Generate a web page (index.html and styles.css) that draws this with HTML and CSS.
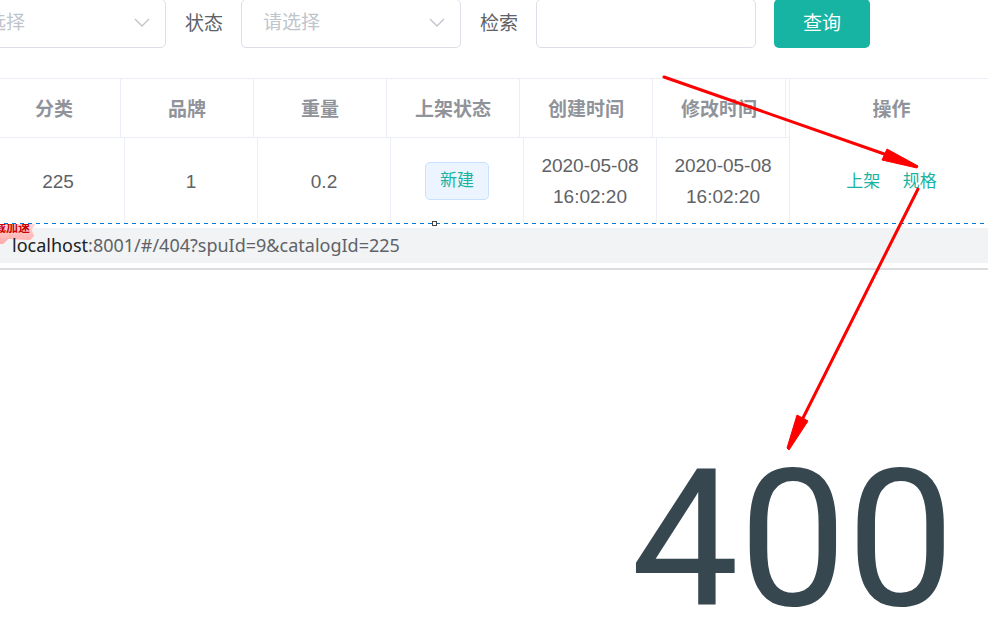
FILE: index.html
```html
<!DOCTYPE html>
<html lang="zh-CN">
<head>
  <meta charset="utf-8">
  <title>商品管理</title>
  <link rel="stylesheet" href="styles.css">
</head>
<body>
  <main class="page">
    <form class="filter">
      <div class="select-box">
        <select class="field" aria-label="品牌">
          <option>请选择</option>
        </select>
        <svg class="chevron" viewBox="0 0 16 9" aria-hidden="true"><path d="M1 1l7 7 7-7"/></svg>
      </div>
      <label for="status">状态</label>
      <div class="select-box">
        <select class="field" id="status">
          <option>请选择</option>
        </select>
        <svg class="chevron" viewBox="0 0 16 9" aria-hidden="true"><path d="M1 1l7 7 7-7"/></svg>
      </div>
      <label for="key">检索</label>
      <input class="field" type="text" id="key">
      <button class="search" type="button">查询</button>
    </form>

    <div class="list">
      <table class="table table-head">
        <colgroup>
          <col span="6" class="col-data">
          <col class="col-gutter">
          <col>
        </colgroup>
        <thead>
          <tr>
            <th>分类</th>
            <th>品牌</th>
            <th>重量</th>
            <th>上架状态</th>
            <th>创建时间</th>
            <th>修改时间</th>
            <th class="gutter"></th>
            <th class="actions">操作</th>
          </tr>
        </thead>
      </table>
      <table class="table table-body">
        <colgroup>
          <col span="6" class="col-data">
          <col>
        </colgroup>
        <tbody>
          <tr>
            <td>225</td>
            <td>1</td>
            <td>0.2</td>
            <td><span class="tag">新建</span></td>
            <td>2020-05-08 16:02:20</td>
            <td>2020-05-08 16:02:20</td>
            <td class="actions">
              <button class="link" type="button">上架</button>
              <button class="link" type="button">规格</button>
            </td>
          </tr>
        </tbody>
      </table>
    </div>

    <div class="divider"><span class="handle"></span></div>

    <div class="address">
      <span class="badge">载加速</span>
      <span class="host">localhost</span>:8001/#/404?spuId=9&amp;catalogId=225
    </div>

    <h1 class="code">400</h1>

    <svg class="arrows" width="988" height="630" viewBox="0 0 988 630" aria-hidden="true">
      <path class="shaft" d="M664 77L890 156M918 189L802 420"/>
      <path class="head" d="M887 149L882 160L917 168L918 166ZM797 415L808 421L789 450L787 448Z"/>
    </svg>
  </main>
</body>
</html>
```
FILE: styles.css
```css
* {
  box-sizing: border-box;
}

body {
  margin: 0;
  background: #fff;
  color: #606266;
  font-family: "Liberation Sans", "Noto Sans CJK SC", sans-serif;
  font-size: 19px;
}

button, input, select {
  font: inherit;
}

.page {
  position: relative;
  min-height: 100vh;
  overflow: hidden;
}

/* filter bar */
.filter {
  display: flex;
  align-items: center;
  margin: -1px 0 0 -54px;
}

.filter label {
  padding: 0 18px 4px 19px;
}

.select-box {
  position: relative;
}

.field {
  display: block;
  width: 220px;
  height: 49px;
  padding: 0 21px 2px;
  border: 1px solid #dcdfe6;
  border-radius: 5px;
  background: #fff;
  color: #c0c4cc;
  appearance: none;
}

.chevron {
  position: absolute;
  top: 19px;
  right: 16px;
  width: 16px;
  height: 9px;
  fill: none;
  stroke: #c0c4cc;
  stroke-width: 1.4;
}

.search {
  width: 96px;
  height: 49px;
  margin-left: 18px;
  padding: 0 0 4px;
  border: 0;
  border-radius: 5px;
  background: #17b3a3;
  color: #fff;
}

/* product list */
.list {
  margin: 30px -6px 0 -12px;
  border-top: 1px solid #ebeef5;
}

.table {
  width: 100%;
  table-layout: fixed;
  border-collapse: separate;
  border-spacing: 0;
  line-height: 31px;
  text-align: center;
}

.col-data {
  width: 133px;
}

.col-gutter {
  width: 4px;
}

.table th {
  padding: 15px 0 12px;
  border-right: 1px solid #ebeef5;
  border-bottom: 1px solid #ebeef5;
  color: #909399;
}

.table .gutter {
  padding: 0;
}

.table td {
  padding: 12px 14px 11px;
  border-right: 1px solid #ebeef5;
}

.table .actions {
  border-color: transparent;
}

.table-body {
  width: calc(100% - 4px);
  margin-left: 4px;
}

.tag {
  display: inline-block;
  height: 38px;
  padding: 0 14px;
  border: 1px solid #c6e2ff;
  border-radius: 5px;
  background: #ecf5ff;
  color: #17b3a3;
  font-size: 17px;
  line-height: 36px;
}

.link {
  padding: 0;
  border: 0;
  background: none;
  color: #17b3a3;
  font-size: 17px;
}

.link + .link {
  margin-left: 17px;
}

/* edge between the list and the address bar */
.divider {
  position: relative;
  height: 5px;
  background: repeating-linear-gradient(90deg, #fff 0 4px, #0078d7 4px 8px) 0 0 / 100% 1px no-repeat;
}

.handle {
  position: absolute;
  top: -2px;
  left: 432px;
  width: 5px;
  height: 5px;
  border: 1px solid #444;
  background: #fff;
}

.address {
  position: relative;
  height: 35px;
  padding-left: 12px;
  background: #f1f3f4;
  box-shadow: 0 5px #fff, 0 7px #dadce0;
  color: #5f6368;
  font-family: "Noto Sans", sans-serif;
  font-size: 18px;
  line-height: 35px;
}

.host {
  position: relative;
  color: #202124;
}

.badge {
  position: absolute;
  top: -4px;
  left: -6px;
  height: 20px;
  padding-right: 5px;
  background: linear-gradient(#ffd6d6, #ffa8a8);
  clip-path: polygon(0 0, 100% 0, 92% 30%, 98% 60%, 88% 80%, 35% 75%, 22% 100%, 0 100%);
  color: #c00;
  font: bold 12px/6px "Noto Sans CJK SC", sans-serif;
}

/* error page */
.code {
  margin: 189px 0 0 631px;
  color: #37474f;
  font-family: Roboto, "Liberation Sans", sans-serif;
  font-size: 192px;
  font-weight: normal;
  line-height: 176px;
}

.arrows {
  position: absolute;
  top: 0;
  left: 0;
  pointer-events: none;
}

.shaft {
  fill: none;
  stroke: #f00;
  stroke-width: 3;
  stroke-linecap: round;
}

.head {
  fill: #f00;
  stroke: #f00;
  stroke-linejoin: round;
}
```
